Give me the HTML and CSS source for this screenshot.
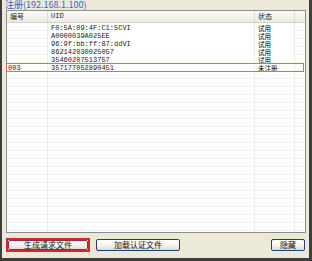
FILE: index.html
```html
<!DOCTYPE html>
<html>
<head>
	<meta charset="utf-8">
	<title>注册</title>
	<link rel="stylesheet" href="styles.css">
</head>
<body>
	<div class="frame">
		<div class="title">注册(192.168.1.100)</div>

		<div class="list">
			<div class="head">
				<div class="hcell c1">编号</div>
				<div class="hcell c2">UID</div>
				<div class="hcell c3">状态</div>
				<div class="hcell c4"></div>
			</div>
			<div class="rows">
				<div class="col c1">
					<div class="id-cell">003</div>
				</div>
				<div class="col c2">
					<div class="uid">F0:5A:09:4F:C1:5CVI</div>
					<div class="uid">A0000039A025EE</div>
					<div class="uid">96:9f:bb:ff:87:ddVI</div>
					<div class="uid">862142030025057</div>
					<div class="uid">35460207513757</div>
					<div class="uid">357177052890451</div>
				</div>
				<div class="col c3">
					<div class="state">试用</div>
					<div class="state">试用</div>
					<div class="state">试用</div>
					<div class="state">试用</div>
					<div class="state">试用</div>
					<div class="state">未注册</div>
				</div>
				<div class="col c4"></div>

				<!-- highlighted row -->
				<div class="mark"></div>
			</div>
		</div>

		<div class="buttons">
			<div class="hl"><button class="btn wide">生成请求文件</button></div>
			<button class="btn wide second">加载认证文件</button>
			<button class="btn small">隐藏</button>
		</div>
	</div>
</body>
</html>
```

FILE: styles.css
```css
html, body {
	margin: 0;
	padding: 0;
	background: #ece9d8;
}
body {
	width: 312px;
	height: 261px;
	overflow: hidden;
	font-family: "Noto Sans CJK SC", "Liberation Sans", sans-serif;
}
.frame {
	box-sizing: border-box;
	height: 261px;
	border-left: 2px solid #3e3e3e;
	border-right: 3px solid #3e3e3e;
	border-bottom: 3px solid #3e3e3e;
	padding: 0 3px 0 2px;
	display: flex;
	flex-direction: column;
}
.title {
	height: 10px;
	padding-left: 1px;
	font-size: 9px;
	line-height: 10px;
	color: #3264c8;
	white-space: nowrap;
}
.list {
	box-sizing: border-box;
	height: 223px;
	margin-left: 2px;
	border: 1px solid #8d8d8d;
	background: #fff;
	display: flex;
	flex-direction: column;
}
.head {
	display: flex;
	height: 11px;
	background: linear-gradient(#fbfbf9, #ebeae2);
	border-bottom: 1px solid #d4d0c4;
	font-size: 7px;
	line-height: 11px;
	color: #222;
}
.hcell {
	box-sizing: border-box;
	border-right: 1px solid #dcd9cc;
	padding-left: 3px;
}
.c1 { width: 41px; }
.c2 { width: 207px; }
.c3 { width: 40px; }
.c4 { flex: 1; border-right: none; }
.hcell.c2 { font-family: "Liberation Mono", monospace; font-size: 7px; }
.rows {
	position: relative;
	flex: 1;
	display: flex;
	background: repeating-linear-gradient(to bottom, transparent 0 7px, #f1f1ef 7px 8px);
}
.col {
	box-sizing: border-box;
	border-right: 1px solid #ecebe6;
	padding-top: 1px;
}
.col.c4 { border-right: none; }
.col.c1 {
	padding-top: 41px;
	padding-left: 1px;
	font-family: "Liberation Mono", monospace;
	font-size: 7px;
	line-height: 8px;
	color: #222;
}
.uid {
	height: 8px;
	padding-left: 3px;
	font-family: "Liberation Mono", monospace;
	font-size: 7px;
	line-height: 8px;
	color: #222;
	background: #fff;
	white-space: nowrap;
}
.state {
	height: 8px;
	padding-left: 3px;
	font-size: 6.5px;
	line-height: 8px;
	color: #000;
	background: #fff;
	white-space: nowrap;
}
.mark {
	position: absolute;
	left: -1px;
	top: 40px;
	width: 296px;
	height: 7px;
	border: 1px solid #e06a6a;
}
.buttons {
	display: flex;
	align-items: center;
	margin-top: 5px;
	padding-left: 2px;
}
.hl {
	box-sizing: border-box;
	width: 84px;
	height: 14px;
	border: 2px solid #d8242e;
	display: flex;
}
.btn {
	box-sizing: border-box;
	height: 12px;
	padding: 0;
	border: 1px solid #1c3f78;
	border-radius: 2px;
	background: linear-gradient(#ffffff, #f2f1ea 60%, #dcdad0);
	font-family: "Noto Sans CJK SC", sans-serif;
	font-size: 8px;
	line-height: 10px;
	color: #111;
}
.hl .btn {
	width: 80px;
	height: 10px;
	line-height: 8px;
	border-color: #8a3040;
}
.btn.second {
	width: 84px;
	margin-left: 6px;
}
.btn.small {
	width: 34px;
	margin-left: auto;
	margin-right: 1px;
}
```
